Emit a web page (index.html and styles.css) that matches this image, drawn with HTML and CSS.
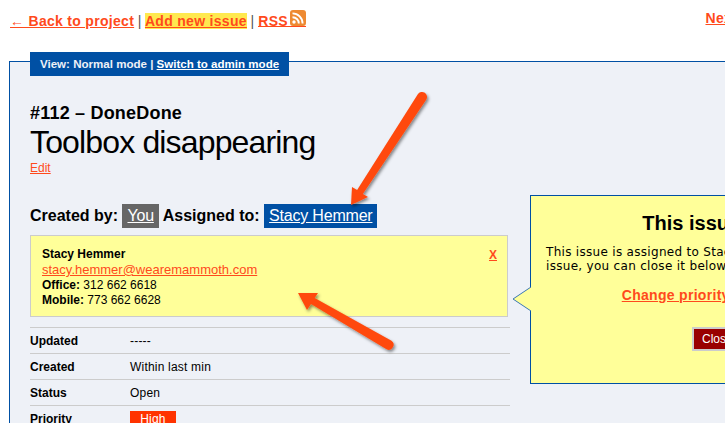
FILE: index.html
```html
<!DOCTYPE html>
<html lang="en">
<head>
  <meta charset="UTF-8" />
  <meta name="viewport" content="width=device-width, initial-scale=1.0"/>
  <title>Toolbox disappearing</title>
  <link rel="stylesheet" href="styles.css">
</head>
<body>

  <div class="page">
    <div class="top-nav">
      <div class="nav-left">
        <a href="#">← Back to project</a>
        <span class="sep">|</span>
        <a href="#" class="highlight">Add new issue</a>
        <span class="sep">|</span>
        <a href="#" class="rss-link">RSS
          <svg class="rss-icon" width="16" height="16" viewBox="0 0 16 16">
            <rect x="0" y="0" width="16" height="16" rx="3" fill="#ee8a32"/>
            <circle cx="4" cy="12" r="1.7" fill="#fff"/>
            <path d="M2.5 7.2a6.3 6.3 0 0 1 6.3 6.3" fill="none" stroke="#fff" stroke-width="1.9"/>
            <path d="M2.5 3.4a10.1 10.1 0 0 1 10.1 10.1" fill="none" stroke="#fff" stroke-width="1.9"/>
          </svg>
        </a>
      </div>
      <a href="#" class="nav-next">Next issue →</a>
    </div>

    <div class="panel">
      <div class="view-tab">View: Normal mode | <a href="#">Switch to admin mode</a></div>

      <div class="issue-layout">
        <div class="issue-main">
          <h2>#112 – DoneDone</h2>
          <h1>Toolbox disappearing</h1>
          <a href="#" class="edit-link">Edit</a>

          <div class="people">
            Created by: <a href="#" class="badge badge-grey">You</a>
            Assigned to: <a href="#" class="badge badge-blue">Stacy Hemmer</a>
          </div>

          <div class="contact-card">
            <a href="#" class="close-x">X</a>
            <strong>Stacy Hemmer</strong><br>
            <a href="#" class="email">stacy.hemmer@wearemammoth.com</a><br>
            <strong>Office:</strong> 312 662 6618<br>
            <strong>Mobile:</strong> 773 662 6628
          </div>

          <table class="details">
            <tr><th>Updated</th><td>-----</td></tr>
            <tr><th>Created</th><td>Within last min</td></tr>
            <tr><th>Status</th><td>Open</td></tr>
            <tr><th>Priority</th><td><span class="priority">High</span></td></tr>
          </table>
        </div>

        <div class="callout">
          <svg class="callout-tip" width="20" height="26" viewBox="0 0 20 26">
            <path d="M19 1 L1 13 L19 25" fill="#ffff99" stroke="#3a78b5" stroke-width="1"/>
            <rect x="19" y="2" width="2" height="22" fill="#ffff99"/>
          </svg>
          <h3>This issue is open</h3>
          <p>This issue is assigned to Stacy Hemmer. If you have fixed this<br>
            issue, you can close it below.</p>
          <a href="#" class="change-link">Change priority or fixer / tester</a>
          <div class="callout-actions"><button>Close issue</button></div>
        </div>
      </div>
    </div>

    <!-- annotation arrows drawn on top of the screenshot -->
    <svg class="arrows" width="725" height="423" viewBox="0 0 725 423">
      <defs>
        <filter id="shadow" x="-20%" y="-20%" width="140%" height="140%">
          <feDropShadow dx="1.5" dy="2" stdDeviation="1.5" flood-color="#000" flood-opacity="0.45"/>
        </filter>
      </defs>
      <g filter="url(#shadow)" fill="#ff4a0d">
        <path d="M417.8 94.2 A5 5 0 0 1 426.2 99.8 L362.9 193.9 L368 197 L351 205 L352 187 L357.1 190.1 Z"/>
        <path d="M386.5 349.3 A5 5 0 0 0 391.5 340.7 L314.7 298 L318 293 L298 293 L307 310 L311 304 Z"/>
      </g>
    </svg>
  </div>

</body>
</html>
```

FILE: styles.css
```css
html, body {
  margin: 0;
  height: 100%;
  overflow: hidden;
  background: #fff;
}
body {
  font-family: "Liberation Sans", Arial, sans-serif;
  font-size: 12px;
  color: #000;
}
a {
  color: #ff4a1c;
}
.page {
  position: relative;
  width: 725px;
  height: 423px;
  overflow: hidden;
}
.top-nav {
  display: flex;
  justify-content: space-between;
  width: 900px;
  height: 52px;
  padding: 10px 0 0 10px;
  box-sizing: border-box;
  font-size: 14px;
  line-height: 17px;
  font-weight: bold;
  letter-spacing: 0.3px;
}
.nav-next {
  margin-right: 103px;
}
.highlight {
  background: #ffe94f;
}
.sep {
  margin: 0 -0.5px;
  font-weight: normal;
  color: #555;
}
.rss-link {
  display: inline-block;
  height: 17px;
  box-sizing: border-box;
  text-decoration: none;
  border-bottom: 1px solid #ff4a1c;
}
.rss-icon {
  margin-left: -2px;
  vertical-align: 0;
}
.panel {
  width: 900px;
  height: 500px;
  margin: 9px 0 0 9px;
  border: 1px solid #0050a4;
  border-width: 1px 0 0 1px;
  background: #eef1f7;
  padding: 0 20px;
  position: relative;
  box-sizing: border-box;
}
.view-tab {
  display: inline-block;
  margin-top: -10px;
  padding: 0 10px;
  height: 24px;
  line-height: 24px;
  background: #0050a4;
  color: #eef1f7;
  font-size: 11.55px;
  font-weight: bold;
  vertical-align: top;
}
.view-tab a {
  color: #fff;
}
.issue-layout {
  display: flex;
  align-items: flex-start;
}
.issue-main {
  width: 480px;
  padding-top: 26px;
}
h2 {
  margin: 0;
  font-size: 18px;
  line-height: 22px;
  letter-spacing: 0.2px;
}
h1 {
  margin: 0;
  font-size: 32px;
  font-weight: normal;
  line-height: 36px;
  letter-spacing: -0.85px;
}
.edit-link {
  display: block;
  margin-top: 1px;
  font-size: 12px;
  line-height: 14px;
}
.people {
  margin-top: 29px;
  font-size: 16px;
  font-weight: bold;
  line-height: 24px;
}
.badge {
  display: inline-block;
  padding: 0 5px;
  font-weight: normal;
  color: #fff;
  letter-spacing: -0.2px;
}
.badge-grey {
  background: #666;
}
.badge-blue {
  background: #0050a4;
}
.contact-card {
  position: relative;
  margin-top: 7px;
  width: 478px;
  box-sizing: border-box;
  padding: 11px;
  height: 82px;
  background: #ffff99;
  border: 1px solid #ccc;
  line-height: 15px;
  font-size: 12px;
}
.close-x {
  float: right;
  font-weight: bold;
  margin-top: 1px;
  margin-right: -1px;
}
.email {
  font-size: 13px;
}
.details {
  width: 480px;
  margin-top: 10px;
  border-collapse: collapse;
}
.details th, .details td {
  border-top: 1px solid #ccc;
  height: 25px;
  padding: 0;
  text-align: left;
  font-size: 12px;
}
.details td {
  letter-spacing: 0.2px;
}
.details th {
  width: 100px;
}
.priority {
  display: inline-block;
  width: 46px;
  margin-top: 2px;
  text-align: center;
  background: #ff3300;
  color: #fff;
  line-height: 17px;
}
.callout {
  position: relative;
  width: 398px;
  height: 189px;
  margin: 119px 0 0 20px;
  box-sizing: border-box;
  padding: 0 15px;
  background: #ffff99;
  border: 1px solid #0050a4;
  text-align: center;
  font-family: "DejaVu Sans", Verdana, sans-serif;
  font-size: 12px;
  line-height: 14px;
}
.callout-tip {
  position: absolute;
  left: -19px;
  top: 90px;
}
.callout h3 {
  margin: 15px 0 10px;
  font-family: "Liberation Sans", Arial, sans-serif;
  font-size: 20px;
  line-height: 24px;
}
.callout p {
  margin: 0;
  text-align: left;
  white-space: nowrap;
  letter-spacing: 0.3px;
}
.change-link {
  display: block;
  margin-top: 13px;
  font-family: "Liberation Sans", Arial, sans-serif;
  font-size: 14px;
  font-weight: bold;
  letter-spacing: 0.3px;
  line-height: 18px;
}
.callout-actions {
  margin-top: 23px;
}
.callout button {
  height: 24px;
  padding: 0 0 0 8px;
  background: #990000;
  color: #fff;
  border: 2px solid #ccc;
  border-right-color: #888;
  font-family: "Liberation Sans", Arial, sans-serif;
  font-size: 12px;
}
.arrows {
  position: absolute;
  left: 0;
  top: 0;
}
```
